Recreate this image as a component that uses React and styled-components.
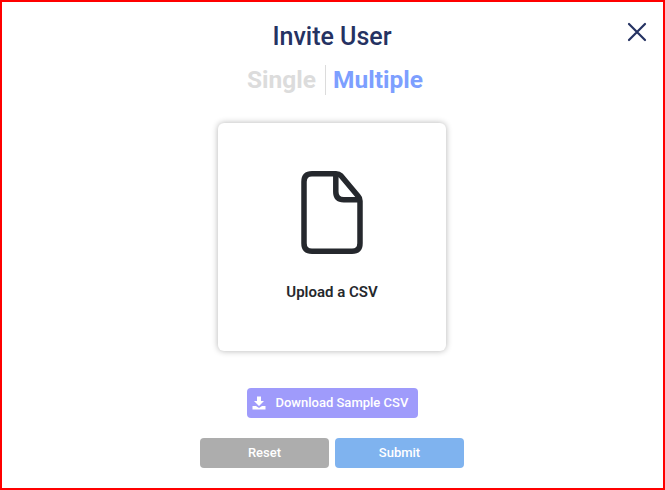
import React from 'react';
import styled, { createGlobalStyle } from 'styled-components';

const Global = createGlobalStyle`
  html, body { margin: 0; padding: 0; background: #fff; }
  * { box-sizing: border-box; }
`;

const Modal = styled.div`
  position: relative;
  width: 665px;
  height: 490px;
  border: 2px solid #f00;
  background: #fff;
  font-family: Roboto, "Liberation Sans", sans-serif;
  display: flex;
  flex-direction: column;
  align-items: center;
  padding: 21px 1px 0 0;
`;

const CloseButton = styled.button`
  position: absolute;
  top: 20px;
  right: 16px;
  width: 20px;
  height: 20px;
  padding: 0;
  border: 0;
  background: none;
  display: flex;
`;

const Title = styled.h1`
  margin: 0;
  font-size: 25px;
  line-height: 28px;
  font-weight: 500;
  color: #253262;
`;

const Tabs = styled.div`
  display: flex;
  align-items: center;
  margin: 13px 0 0 6px;
  height: 32px;
`;

const Tab = styled.span`
  font-size: 24.5px;
  line-height: 28px;
  font-weight: 700;
  color: ${p => (p.$active ? '#7d9fff' : '#dcdcdc')};
`;

const Divider = styled.span`
  width: 1px;
  height: 30px;
  margin: 0 7px 0 9px;
  background: #dcdcdc;
`;

const Card = styled.div`
  width: 228px;
  height: 228px;
  margin-top: 27px;
  border-radius: 6px;
  background: #fff;
  box-shadow: 0 0 6px rgba(0, 0, 0, 0.3);
  display: flex;
  flex-direction: column;
  align-items: center;
  padding-top: 47px;
`;

const CardLabel = styled.div`
  margin-top: 28px;
  font-size: 15px;
  line-height: 20px;
  font-weight: 600;
  color: #25282d;
`;

const DownloadButton = styled.button`
  width: 171px;
  height: 30px;
  margin-top: 37px;
  border: 0;
  border-radius: 4px;
  padding: 0 0 1px 5px;
  background: #9f9bfb;
  color: #fff;
  font: 500 13px Roboto, "Liberation Sans", sans-serif;
  display: flex;
  align-items: center;
  gap: 10px;
`;

const Actions = styled.div`
  display: flex;
  gap: 6px;
  margin-top: 20px;
`;

const ActionButton = styled.button`
  width: 129px;
  height: 30px;
  border: 0;
  border-radius: 4px;
  padding: 0 0 1px;
  background: ${p => p.$bg};
  color: #fff;
  font: 500 13px Roboto, "Liberation Sans", sans-serif;
`;

export default function App() {
  return (
    <>
      <Global />
      <Modal>
        <CloseButton aria-label="Close">
          <svg width="20" height="20" viewBox="0 0 20 20" fill="none" stroke="#253262" strokeWidth="2.2" strokeLinecap="round">
            <path d="M2 2 L18 18 M18 2 L2 18" />
          </svg>
        </CloseButton>
        <Title>Invite User</Title>
        <Tabs>
          <Tab>Single</Tab>
          <Divider />
          <Tab $active>Multiple</Tab>
        </Tabs>
        <Card>
          <svg width="64" height="84" viewBox="0 0 64 84" fill="none" stroke="#25282d" strokeWidth="5.5" strokeLinejoin="round">
            <path d="M36 3.8 H12 Q4 3.8 4 11.8 V73.2 Q4 81.2 12 81.2 H52 Q60 81.2 60 73.2 V31 Q60 28 58 26 L41 5.8 Q39 3.8 36 3.8 Z" />
            <path d="M35.8 3.8 V21.8 Q35.8 29.8 43.8 29.8 H60" />
          </svg>
          <CardLabel>Upload a CSV</CardLabel>
        </Card>
        <DownloadButton>
          <svg width="14" height="14" viewBox="0 0 14 14" fill="#fff">
            <path d="M5 0.5 H9 V5 H12 L7 10 L2 5 H5 Z" />
            <path d="M0.5 10 H4 L7 12 L10 10 H13.5 V13.5 H0.5 Z" />
          </svg>
          Download Sample CSV
        </DownloadButton>
        <Actions>
          <ActionButton $bg="#adadad">Reset</ActionButton>
          <ActionButton $bg="#7fb3ef">Submit</ActionButton>
        </Actions>
      </Modal>
    </>
  );
}
